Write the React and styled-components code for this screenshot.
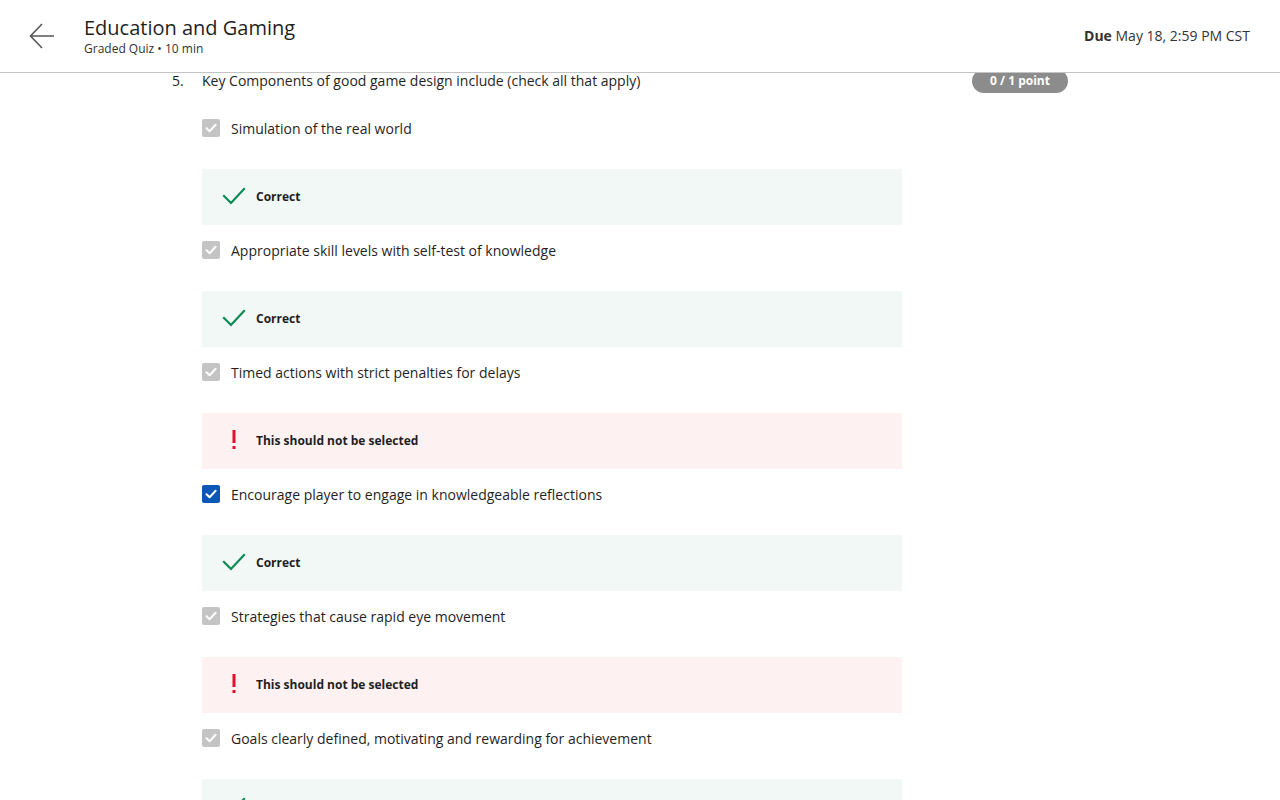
import React from 'react';
import styled, { createGlobalStyle } from 'styled-components';

const GlobalStyle = createGlobalStyle`
    html, body {
        margin: 0;
        padding: 0;
        background: #ffffff;
        font-family: "Open Sans", "Noto Sans", sans-serif;
        color: #1f1f1f;
    }
    * { box-sizing: border-box; }
`;

const Page = styled.div`
    display: flex;
    flex-direction: column;
    height: 800px;
    overflow: hidden;
`;

const Header = styled.header`
    flex: 0 0 73px;
    display: flex;
    align-items: center;
    padding: 0 30px 0 28px;
    border-bottom: 1px solid #c4c4c4;
    background: #fff;
    position: relative;
    z-index: 2;
`;

const BackButton = styled.button`
    border: 0;
    background: none;
    padding: 0;
    width: 28px;
    height: 28px;
    display: flex;
    align-items: center;
    justify-content: center;
    margin-right: 28px;
    margin-top: -1px;
    cursor: pointer;
`;

const TitleBlock = styled.div`
    display: flex;
    flex-direction: column;
    flex: 1;
    margin-top: -2px;
`;

const Title = styled.h1`
    margin: 0;
    font-size: 20px;
    font-weight: 400;
    line-height: 27px;
    color: #1f1f1f;
`;

const Subtitle = styled.div`
    font-size: 12px;
    line-height: 16px;
    color: #333;
`;

const Due = styled.div`
    font-size: 14px;
    color: #333;
    margin-top: -2px;

    b { font-weight: 700; }
`;

const Scroller = styled.main`
    flex: 1;
    overflow: hidden;
`;

const Content = styled.div`
    margin-top: -5px;
    margin-left: 172px;
    width: 896px;
`;

const QuestionRow = styled.div`
    display: flex;
    align-items: center;
    height: 24px;
    margin-bottom: 24px;
`;

const Number = styled.span`
    width: 30px;
    font-size: 14px;
`;

const QuestionText = styled.span`
    flex: 1;
    font-size: 14px;
    color: #1f1f1f;
`;

const Points = styled.span`
    background: #8c8c8c;
    color: #fff;
    font-size: 12px;
    font-weight: 700;
    height: 24px;
    width: 96px;
    margin-top: 1px;
    border-radius: 12px;
    display: flex;
    align-items: center;
    justify-content: center;
`;

const Options = styled.div`
    margin-left: 30px;
`;

const OptionRow = styled.label`
    display: flex;
    align-items: center;
    height: 24px;
    margin-bottom: 29px;
    font-size: 14px;
    color: #1f1f1f;
`;

const Box = styled.span`
    width: 18px;
    height: 18px;
    border-radius: 2px;
    background: ${p => (p.$active ? '#0a58b5' : '#c4c4c4')};
    display: flex;
    align-items: center;
    justify-content: center;
    margin-right: 11px;
`;

const Feedback = styled.div`
    width: 700px;
    height: 56px;
    margin-bottom: 13px;
    padding-bottom: 2px;
    background: ${p => (p.$ok ? '#f2f8f5' : '#fdf1f2')};
    display: flex;
    align-items: center;
    font-size: 12px;
    font-weight: 700;
    color: #1f1f1f;
`;

const IconSlot = styled.span`
    width: 54px;
    display: flex;
    justify-content: center;
    padding-left: 10px;
`;

const Tick = ({ color = '#fff', size = 14 }) => (
    <svg width={size} height={size} viewBox="0 0 14 14" fill="none">
        <path d="M2.5 7.2 L5.6 10.2 L11.6 3.8" stroke={color} strokeWidth="2" strokeLinecap="round" strokeLinejoin="round" />
    </svg>
);

const BigCheck = () => (
    <svg width="24" height="20" viewBox="0 0 24 20" fill="none">
        <path d="M2 10 L9 17 L22 3" stroke="#0c8a56" strokeWidth="2.2" strokeLinecap="square" />
    </svg>
);

const Bang = () => (
    <svg width="6" height="20" viewBox="0 0 6 20">
        <rect x="1.5" y="0" width="3" height="13" fill="#e0102f" />
        <rect x="1.5" y="16" width="3" height="3" fill="#e0102f" />
    </svg>
);

const options = [
    { text: 'Simulation of the real world', ok: true },
    { text: 'Appropriate skill levels with self-test of knowledge', ok: true },
    { text: 'Timed actions with strict penalties for delays', ok: false },
    { text: 'Encourage player to engage in knowledgeable reflections', ok: true, selected: true },
    { text: 'Strategies that cause rapid eye movement', ok: false },
    { text: 'Goals clearly defined, motivating and rewarding for achievement', ok: true },
];

function App() {
    return (
        <Page>
            <GlobalStyle />
            <Header>
                <BackButton aria-label="Back">
                    <svg width="28" height="28" viewBox="0 0 28 28" fill="none">
                        <path d="M26 14 H3 M14 2 L2.5 14 L14 26" stroke="#555" strokeWidth="1.6" />
                    </svg>
                </BackButton>
                <TitleBlock>
                    <Title>Education and Gaming</Title>
                    <Subtitle>Graded Quiz • 10 min</Subtitle>
                </TitleBlock>
                <Due><b>Due</b> May 18, 2:59 PM CST</Due>
            </Header>
            <Scroller>
                <Content>
                    <QuestionRow>
                        <Number>5.</Number>
                        <QuestionText>Key Components of good game design include (check all that apply)</QuestionText>
                        <Points>0 / 1 point</Points>
                    </QuestionRow>
                    <Options>
                        {options.map(o => (
                            <React.Fragment key={o.text}>
                                <OptionRow>
                                    <Box $active={o.selected}><Tick /></Box>
                                    {o.text}
                                </OptionRow>
                                <Feedback $ok={o.ok}>
                                    <IconSlot>{o.ok ? <BigCheck /> : <Bang />}</IconSlot>
                                    {o.ok ? 'Correct' : 'This should not be selected'}
                                </Feedback>
                            </React.Fragment>
                        ))}
                    </Options>
                </Content>
            </Scroller>
        </Page>
    );
}

export default App;
